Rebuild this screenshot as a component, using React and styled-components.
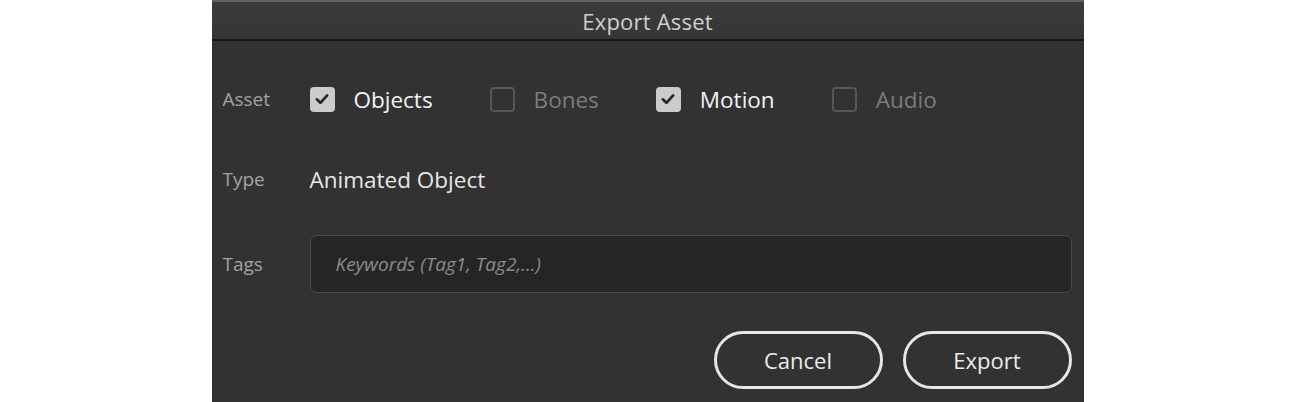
import styled, { createGlobalStyle } from 'styled-components';

const GlobalStyle = createGlobalStyle`
  html, body {
    margin: 0;
    padding: 0;
    background: #ffffff;
    height: 100%;
  }
  body {
    font-family: 'Open Sans', 'Noto Sans', sans-serif;
  }
`;

const options = [
  { label: 'Objects', checked: true },
  { label: 'Bones', checked: false },
  { label: 'Motion', checked: true },
  { label: 'Audio', checked: false },
];

function Check({ checked }) {
  return (
    <Box checked={checked}>
      {checked && (
        <svg width="18" height="18" viewBox="0 0 16 16">
          <path d="M3.4 8.3 L6.6 11.4 L12.6 4.8" fill="none" stroke="#262626" strokeWidth="2.4" strokeLinecap="round" strokeLinejoin="round" />
        </svg>
      )}
    </Box>
  );
}

export default function App() {
  return (
    <Page>
      <GlobalStyle />
      <Dialog>
        <TitleBar>Export Asset</TitleBar>
        <Body>
          <Row height={58} top={29}>
            <Label>Asset</Label>
            <Options>
              {options.map((o) => (
                <Option key={o.label}>
                  <Check checked={o.checked} />
                  <OptionText checked={o.checked}>{o.label}</OptionText>
                </Option>
              ))}
            </Options>
          </Row>
          <Row height={40} top={31}>
            <Label>Type</Label>
            <Value>Animated Object</Value>
          </Row>
          <Row height={58} top={36}>
            <Label>Tags</Label>
            <TagInput placeholder="Keywords (Tag1, Tag2,...)" />
          </Row>
          <Actions>
            <PillButton>Cancel</PillButton>
            <PillButton>Export</PillButton>
          </Actions>
        </Body>
      </Dialog>
    </Page>
  );
}

const Page = styled.div`
  display: flex;
  justify-content: center;
  width: 100%;
  height: 402px;
  overflow: hidden;
`;
const Dialog = styled.div`
  width: 872px;
  height: 402px;
  background: #323232;
  display: flex;
  flex-direction: column;
`;
const TitleBar = styled.div`
  height: 37px;
  border-top: 2px solid #626262;
  border-bottom: 2px solid #161616;
  background: linear-gradient(180deg, #3b3b3b 0%, #363636 100%);
  color: #d0d0d0;
  font-size: 22px;
  display: flex;
  align-items: center;
  justify-content: center;
  letter-spacing: 0.2px;
`;
const Body = styled.div`
  display: flex;
  flex-direction: column;
  padding: 0 12px 0 11px;
`;
const Row = styled.div`
  display: flex;
  align-items: center;
  height: ${(p) => p.height}px;
  margin-top: ${(p) => p.top || 0}px;
`;
const Label = styled.div`
  width: 87px;
  flex-shrink: 0;
  color: #a3a3a3;
  font-size: 19px;
`;
const Options = styled.div`
  display: flex;
  align-items: center;
  gap: 57px;
`;
const Option = styled.div`
  display: flex;
  align-items: center;
  gap: 19px;
`;
const Box = styled.div`
  width: 25px;
  height: 25px;
  box-sizing: border-box;
  border-radius: 4px;
  display: flex;
  align-items: center;
  justify-content: center;
  background: ${(p) => (p.checked ? '#cbcbcb' : 'transparent')};
  border: ${(p) => (p.checked ? 'none' : '2px solid #575757')};
`;
const OptionText = styled.span`
  font-size: 22.5px;
  font-weight: 500;
  color: ${(p) => (p.checked ? '#f2f2f2' : '#7c7c7c')};
`;
const Value = styled.div`
  font-size: 22.5px;
  font-weight: 500;
  color: #e6e6e6;
`;
const TagInput = styled.input`
  flex: 1;
  height: 58px;
  box-sizing: border-box;
  background: #252525;
  border: 1.5px solid #4a4a4a;
  border-radius: 7px;
  padding: 0 0 0 25px;
  color: #e0e0e0;
  font-family: 'Open Sans', 'Noto Sans', sans-serif;
  font-size: 19px;
  outline: none;
  &::placeholder {
    color: #8c8c8c;
    font-style: italic;
  }
`;
const Actions = styled.div`
  display: flex;
  justify-content: flex-end;
  gap: 20px;
  margin-top: 38px;
`;
const PillButton = styled.button`
  width: 169px;
  height: 58px;
  box-sizing: border-box;
  border: 3px solid #e6e6e6;
  border-radius: 29px;
  background: transparent;
  color: #ececec;
  font-family: 'Open Sans', 'Noto Sans', sans-serif;
  font-size: 22px;
`;
